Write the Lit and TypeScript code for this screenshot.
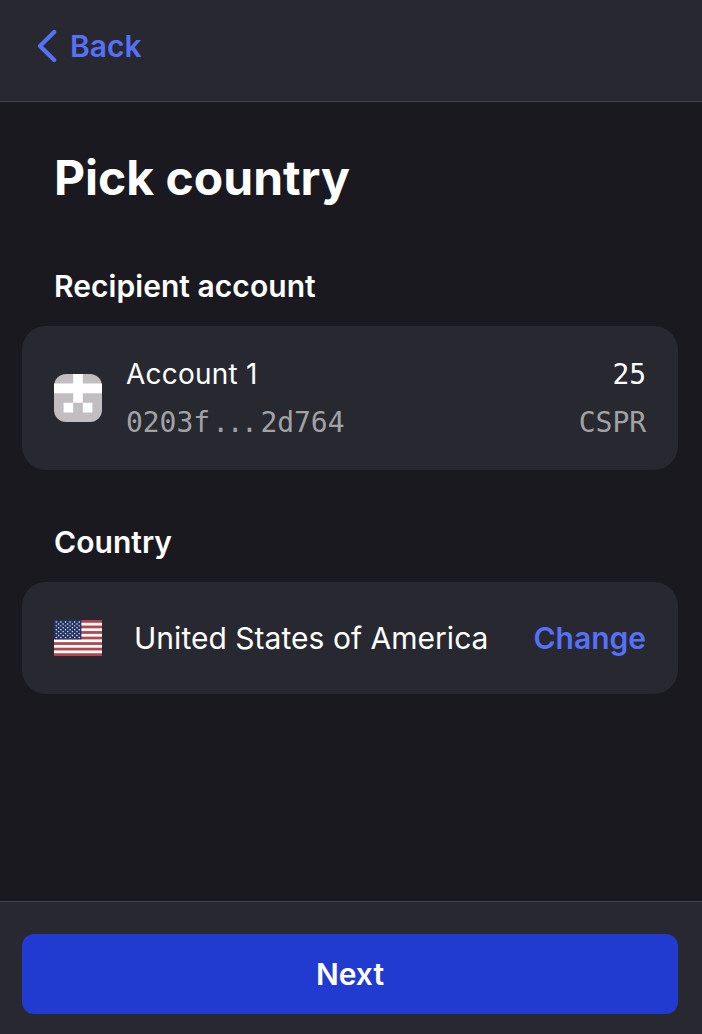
import { LitElement, html, css, svg } from "lit";
import { customElement } from "lit/decorators.js";

const stripes = Array.from({ length: 7 }, (_, i) => i * 5.54);
const stars = Array.from({ length: 9 }, (_, row) =>
  Array.from({ length: row % 2 ? 5 : 6 }, (_, col) => ({
    x: 2.3 + col * 4.6 + (row % 2 ? 2.3 : 0),
    y: 2 + row * 1.93,
  })),
).flat();

@customElement("app-root")
export class AppRoot extends LitElement {
  static styles = css`
    :host { display: flex; flex-direction: column; height: 1034px; background: #1a191f; color: #fff; font-family: Inter, sans-serif; font-size: 30px; overflow: hidden; }
    * { box-sizing: border-box; }
    header { height: 102px; background: #282830; border-bottom: 1px solid #45444b; padding: 28px 0 0 36px; }
    .back { display: flex; align-items: center; gap: 12px; height: 36px; color: #5670f8; font-weight: 600; }
    svg { display: block; flex: none; }
    main { flex: 1; padding: 44px 24px 0 22px; }
    h1 { margin: 0; padding-left: 32px; font-size: 48px; line-height: 64px; font-weight: 700; }
    h2 { margin: 0; padding-left: 32px; font-size: 30px; line-height: 40px; font-weight: 600; letter-spacing: 0.05px; }
    .recipient { margin-top: 56px; }
    .country { margin-top: 52px; }
    .card { margin-top: 20px; background: #282830; border-radius: 24px; padding: 0 32px; display: flex; align-items: center; }
    .account { height: 144px; gap: 24px; }
    .avatar { border-radius: 12px; }
    .rows { flex: 1; font-size: 28px; }
    .row { display: flex; justify-content: space-between; height: 48px; line-height: 48px; }
    .label { letter-spacing: 0.22px; }
    .mono { font-family: "DejaVu Sans Mono", monospace; letter-spacing: -0.06px; line-height: 50px; }
    .dots { letter-spacing: -2.5px; margin: 0 5.1px 0 2.3px; }
    .muted { color: #a2a2a5; }
    .place { height: 112px; }
    .name { flex: 1; margin-left: 32px; letter-spacing: 0.03px; }
    .change { color: #5670f8; font-weight: 600; }
    footer { height: 133px; background: #282830; border-top: 1px solid #45444b; padding: 32px 24px 0 22px; }
    button { display: block; width: 100%; height: 80px; border: 0; border-radius: 12px; background: #213ad0; color: #fff; font: 600 30px Inter, sans-serif; }
  `;
  render() {
    return html`
      <header>
        <div class="back">
          <svg width="22" height="36" viewBox="0 0 22 36"><path d="M18.2 4L4 18L18.2 32" fill="none" stroke="#5670f8" stroke-width="4.3" stroke-linecap="round" stroke-linejoin="round"/></svg>
          <span>Back</span>
        </div>
      </header>
      <main>
        <h1>Pick country</h1>
        <h2 class="recipient">Recipient account</h2>
        <div class="card account">
          <svg class="avatar" width="48" height="48" viewBox="0 0 48 48">
            <rect width="48" height="48" fill="#c1bdc1"/>
            <path d="M19.2 0H28.8V9.6H48V19.2H28.8V28.8H19.2V19.2H0V9.6H19.2ZM9.6 28.8H19.2V38.4H9.6ZM28.8 28.8H38.4V38.4H28.8Z" fill="#fff"/>
          </svg>
          <div class="rows">
            <div class="row"><span class="label">Account 1</span><span class="mono">25</span></div>
            <div class="row mono muted"><span>0203f<span class="dots">...</span>2d764</span><span>CSPR</span></div>
          </div>
        </div>
        <h2 class="country">Country</h2>
        <div class="card place">
          <svg width="48" height="36" viewBox="0 0 48 36">
            <rect width="48" height="36" fill="#fff"/>
            ${stripes.map((y) => svg`<rect y=${y} width="48" height="2.77" fill="#b5454b"/>`)}
            <rect width="27.4" height="19.38" fill="#233466"/>
            ${stars.map((s) => svg`<circle cx=${s.x} cy=${s.y} r="0.7" fill="#fff"/>`)}
          </svg>
          <span class="name">United States of America</span><span class="change">Change</span>
        </div>
      </main>
      <footer><button>Next</button></footer>`;
  }
}
